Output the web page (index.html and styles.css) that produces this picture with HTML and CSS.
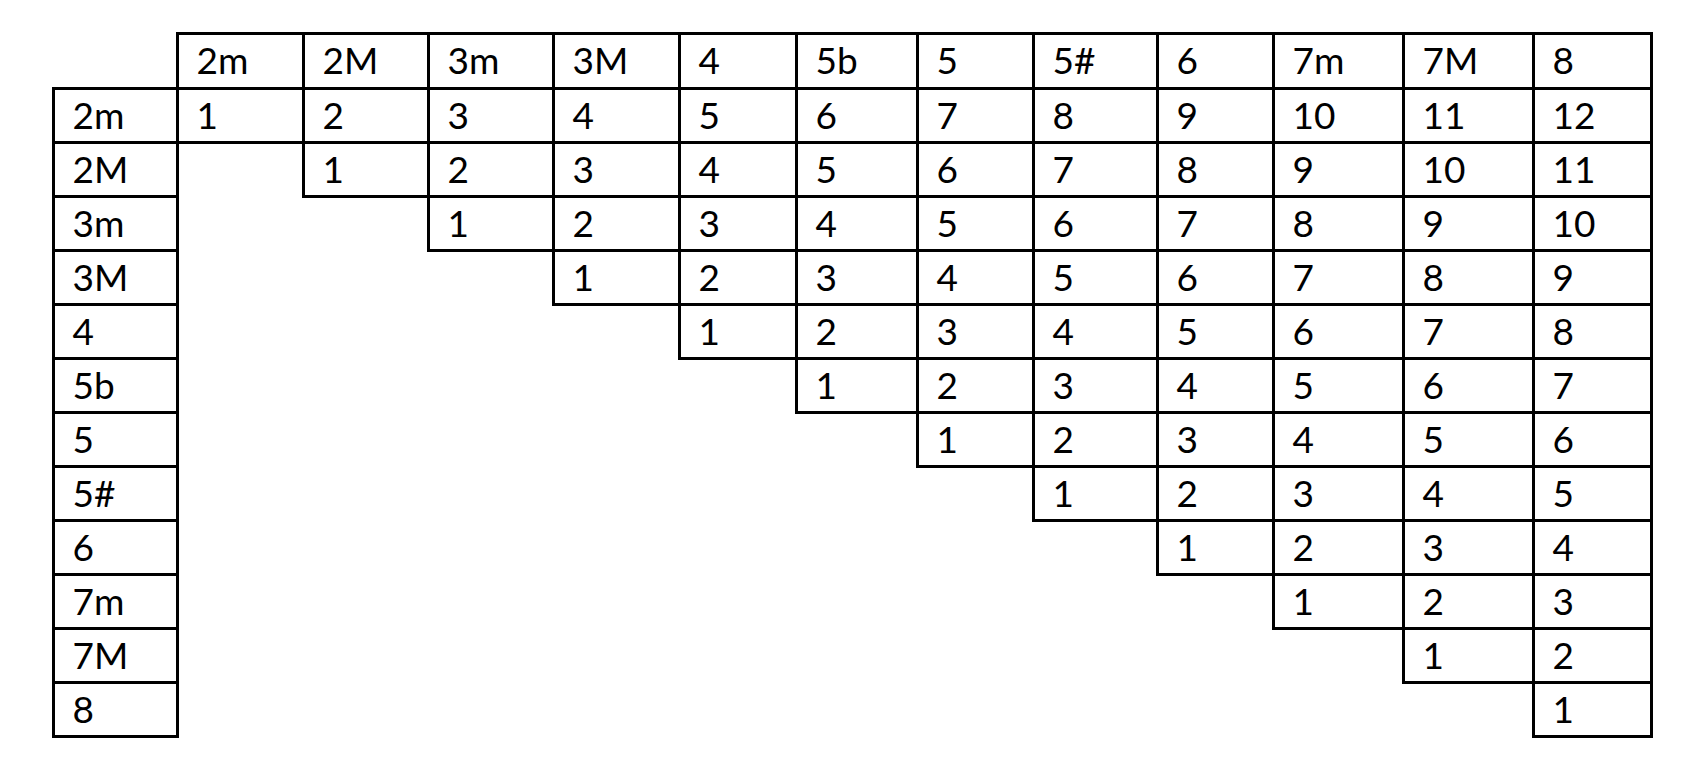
FILE: index.html
```html
<!DOCTYPE html>
<html>
<head>
<meta charset="utf-8">
<link rel="stylesheet" href="styles.css">
</head>
<body>
<div class="page">
<table class="grid">
<colgroup>
<col class="c0"><col class="c1"><col class="c2"><col class="c3"><col class="c4"><col class="c5"><col class="c6"><col class="c7"><col class="c8"><col class="c9"><col class="c10"><col class="c11"><col class="c12">
</colgroup>
<tr class="head"><td class="blank"></td><td>2m</td><td>2M</td><td>3m</td><td>3M</td><td>4</td><td>5b</td><td>5</td><td>5#</td><td>6</td><td>7m</td><td>7M</td><td>8</td></tr>
<tr><td>2m</td><td>1</td><td>2</td><td>3</td><td>4</td><td>5</td><td>6</td><td>7</td><td>8</td><td>9</td><td>10</td><td>11</td><td>12</td></tr>
<tr><td>2M</td><td class="blank"></td><td>1</td><td>2</td><td>3</td><td>4</td><td>5</td><td>6</td><td>7</td><td>8</td><td>9</td><td>10</td><td>11</td></tr>
<tr><td>3m</td><td class="blank"></td><td class="blank"></td><td>1</td><td>2</td><td>3</td><td>4</td><td>5</td><td>6</td><td>7</td><td>8</td><td>9</td><td>10</td></tr>
<tr><td>3M</td><td class="blank"></td><td class="blank"></td><td class="blank"></td><td>1</td><td>2</td><td>3</td><td>4</td><td>5</td><td>6</td><td>7</td><td>8</td><td>9</td></tr>
<tr><td>4</td><td class="blank"></td><td class="blank"></td><td class="blank"></td><td class="blank"></td><td>1</td><td>2</td><td>3</td><td>4</td><td>5</td><td>6</td><td>7</td><td>8</td></tr>
<tr><td>5b</td><td class="blank"></td><td class="blank"></td><td class="blank"></td><td class="blank"></td><td class="blank"></td><td>1</td><td>2</td><td>3</td><td>4</td><td>5</td><td>6</td><td>7</td></tr>
<tr><td>5</td><td class="blank"></td><td class="blank"></td><td class="blank"></td><td class="blank"></td><td class="blank"></td><td class="blank"></td><td>1</td><td>2</td><td>3</td><td>4</td><td>5</td><td>6</td></tr>
<tr><td>5#</td><td class="blank"></td><td class="blank"></td><td class="blank"></td><td class="blank"></td><td class="blank"></td><td class="blank"></td><td class="blank"></td><td>1</td><td>2</td><td>3</td><td>4</td><td>5</td></tr>
<tr><td>6</td><td class="blank"></td><td class="blank"></td><td class="blank"></td><td class="blank"></td><td class="blank"></td><td class="blank"></td><td class="blank"></td><td class="blank"></td><td>1</td><td>2</td><td>3</td><td>4</td></tr>
<tr><td>7m</td><td class="blank"></td><td class="blank"></td><td class="blank"></td><td class="blank"></td><td class="blank"></td><td class="blank"></td><td class="blank"></td><td class="blank"></td><td class="blank"></td><td>1</td><td>2</td><td>3</td></tr>
<tr><td>7M</td><td class="blank"></td><td class="blank"></td><td class="blank"></td><td class="blank"></td><td class="blank"></td><td class="blank"></td><td class="blank"></td><td class="blank"></td><td class="blank"></td><td class="blank"></td><td>1</td><td>2</td></tr>
<tr><td>8</td><td class="blank"></td><td class="blank"></td><td class="blank"></td><td class="blank"></td><td class="blank"></td><td class="blank"></td><td class="blank"></td><td class="blank"></td><td class="blank"></td><td class="blank"></td><td class="blank"></td><td>1</td></tr>
</table>
</div>
</body>
</html>
```

FILE: styles.css
```css
html, body {
  margin: 0;
  padding: 0;
  background: #ffffff;
}

.page {
  padding: 31.5px 0 0 51.5px;
}

.grid {
  border-collapse: collapse;
  table-layout: fixed;
  width: 1598px;
  font-family: Lato, "Open Sans", sans-serif;
  font-size: 37px;
  color: #000000;
}

.c0 { width: 124px; }
.c1 { width: 126px; }
.c2 { width: 125px; }
.c3 { width: 125px; }
.c4 { width: 126px; }
.c5 { width: 117px; }
.c6 { width: 121px; }
.c7 { width: 116px; }
.c8 { width: 124px; }
.c9 { width: 116px; }
.c10 { width: 130px; }
.c11 { width: 130px; }
.c12 { width: 118px; }

.grid tr {
  height: 54px;
}

.grid tr.head {
  height: 55px;
}

.grid td {
  border: 3px solid #000000;
  padding: 0 0 0 18px;
  vertical-align: middle;
  line-height: 1.2;
  white-space: nowrap;
  overflow: hidden;
}

.grid td.blank {
  border: none;
}
```
